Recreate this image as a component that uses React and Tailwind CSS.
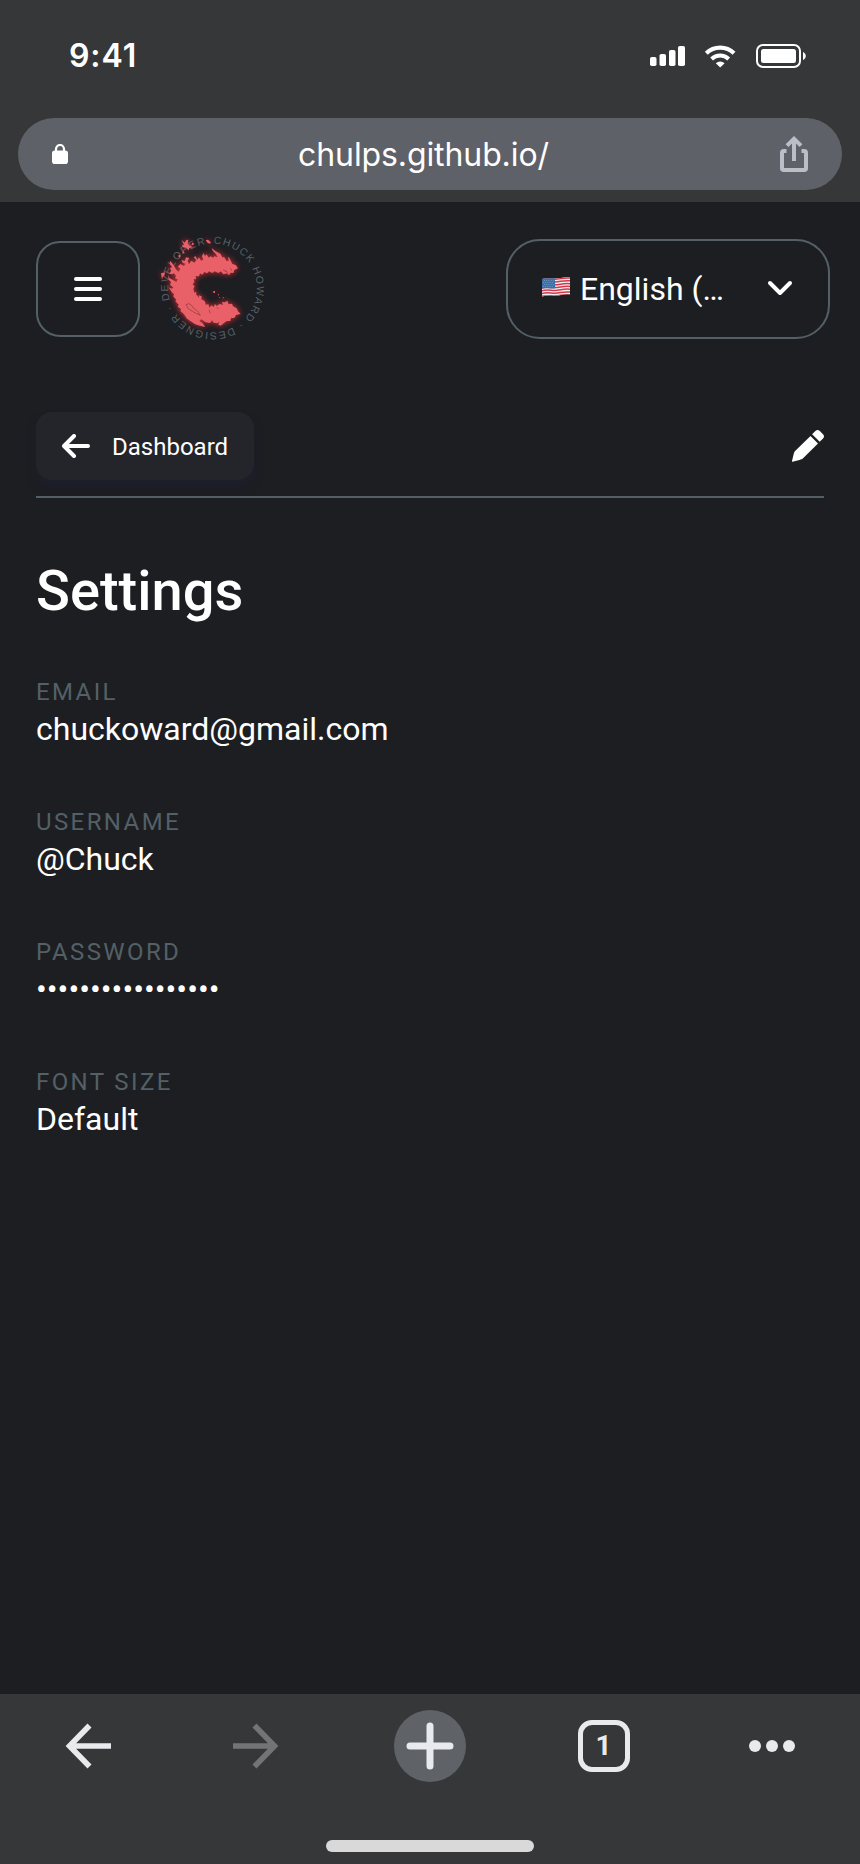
import React from "react";

const FIELDS = [
  { label: "EMAIL", value: "chuckoward@gmail.com" },
  { label: "USERNAME", value: "@Chuck" },
  { label: "PASSWORD", value: "•••••••••••••••••" },
  { label: "FONT SIZE", value: "Default" },
];

function StatusBar() {
  return (
    <div className="flex h-[118px] items-start justify-between pl-[69px] pr-[53px]">
      <span className="mt-[36px] font-['Inter'] text-[32px] font-semibold leading-[40px] tracking-[0.9px]">9:41</span>
      <svg className="mt-[43px]" width="157" height="26" viewBox="650 43 157 26" fill="#fff">
        <rect x="650" y="57" width="6.5" height="9" rx="1.8" />
        <rect x="659.5" y="54" width="6.5" height="12" rx="1.8" />
        <rect x="669" y="50" width="6.5" height="16" rx="1.8" />
        <rect x="678" y="46" width="7" height="20" rx="1.8" />
        <path d="M706.3 53.2A20 20 0 0 1 734 53.2" fill="none" stroke="#fff" strokeWidth="4.2" />
        <path d="M711.6 59A12.5 12.5 0 0 1 728.7 59" fill="none" stroke="#fff" strokeWidth="4" />
        <path d="M715.8 63.2a6.8 6.8 0 0 1 8.8 0l-4.4 4.4z" />
        <rect x="757" y="45" width="43" height="22" rx="6" fill="none" stroke="#fff" strokeWidth="2" />
        <rect x="761" y="49" width="35" height="14" rx="2.5" />
        <path d="M803 52c3.700 1.600 3.700 6.400 0 8z" />
      </svg>
    </div>
  );
}

function AddressBar() {
  return (
    <div className="mx-[18px] flex h-[72px] items-center justify-between rounded-full bg-[#5f6168] pl-[34px] pr-[34px]">
      <svg width="16" height="20" viewBox="0 0 16 20" className="shrink-0">
        <rect y="6.5" width="16" height="13.5" rx="2.8" fill="#fff" />
        <path d="M4 8V5a4 4 0 0 1 8 0v3" fill="none" stroke="#fff" strokeWidth="2.2" />
      </svg>
      <span className="-ml-px mt-px font-['Inter'] text-[32px] leading-[40px] tracking-[-0.1px]">chulps.github.io/</span>
      <svg width="28" height="36" viewBox="0 0 28 36" fill="none" stroke="#bbbec8" strokeWidth="4">
        <path d="M6.5 15H3.8A1.8 1.8 0 0 0 2 16.800V32.200A1.800 1.800 0 0 0 3.800 34H24.200A1.800 1.800 0 0 0 26 32.200V16.800A1.800 1.800 0 0 0 24.200 15H21.500" />
        <path d="M14 25V3M7 9.700L14 2.800L21 9.700" />
      </svg>
    </div>
  );
}

function Logo() {
  return (
    <svg width="125" height="125" viewBox="0 0 375 375" className="mb-[3px] ml-[10px] overflow-visible">
      <defs>
        <path id="ring" d="M187.500 56A133 133 0 1 1 187.400 56" />
        <filter id="glow" x="-30%" y="-30%" width="160%" height="160%">
          <feGaussianBlur stdDeviation="9" />
        </filter>
        <g id="splash">
          <path d="M264 130L257 120L247 117L238 98L234 96L236 108L229 107L222 95L218 98L211 86L197 79L185 69L188 77L198 88L203 97L193 94L190 98L181 94L176 98L170 88L165 93L160 84L156 94L160 104L153 107L147 97L142 104L137 94L131 96L139 106L133 113L124 107L117 118L113 108L118 99L108 97L104 108L94 105L98 113L106 116L102 123L91 117L83 125L91 131L86 140L79 134L70 119L61 107L59 117L66 126L60 130L64 138L58 146L66 148L72 145L78 153L75 160L83 163L79 171L68 164L59 160L54 151L56 164L63 171L60 180L70 187L66 191L56 187L65 201L73 209L69 213L79 224L76 229L86 239L83 245L93 252L91 258L102 268L111 281L124 290L136 298L150 302L166 306L158 295L148 287L154 283L167 292L180 294L186 286L191 293L202 295L208 290L205 299L212 302L222 294L230 288L241 288L243 279L253 279L258 270L272 267L264 259L260 250L249 244L246 236L236 238L232 227L225 232L216 231L219 240L209 237L200 243L195 237L191 246L184 241L178 248L175 237L168 240L164 228L154 223L155 214L146 211L148 219L138 208L139 200L133 203L130 191L134 184L128 178L133 171L131 162L138 163L137 153L147 154L150 145L157 149L163 141L171 145L177 139L187 144L194 139L205 144L213 139L220 148L231 145L237 151L242 143L250 144L253 135Z" />
          <path d="M95 45L104 53L109 45L115 44L113 55L118 62L130 66L118 69L116 76L108 68L99 67L96 60L102 60ZM33 145L45 142L44 149L38 156L36 164ZM167 46L174 44L182 51L181 56L173 54ZM97 80L101 78L102 84L98 87ZM86 89L91 91L90 98L85 95ZM126 53L131 54L130 60L126 60ZM190 198h5v6h-5zM204 208h3v3h-3zM207 216h2v3h-2zM218 217h3v3h-3zM67 122L75 132L70 135Z" />
        </g>
      </defs>
      <text fill="#566268" className="font-['Liberation_Sans'] text-[31px]">
        <textPath href="#ring" startOffset="3" textLength="810" lengthAdjust="spacing">CHUCK HOWARD · DESIGNER · DEVELOPER</textPath>
      </text>
      <use href="#splash" fill="#f5303c" opacity="0.85" filter="url(#glow)" />
      <use href="#splash" fill="#ea6068" />
      <path d="M82 252L99 270L112 284L128 294" fill="none" stroke="#7a2c34" strokeWidth="2" />
      <path d="M108 239L116 236L124 240L130 249L143 259L151 271L140 266L127 259L116 252L108 239M226 136L235 144M219 134L229 141M242 130L245 137M200 246L205 252M177 255L181 265" fill="none" stroke="#8d363e" strokeWidth="2" />
    </svg>
  );
}

function Flag() {
  return (
    <svg width="30" height="22" viewBox="0 0 30 22">
      <defs>
        <clipPath id="flagShape">
          <path d="M1 3C5 1.500 9 2.500 14 2.500S23 .5 29 1.500V18.500C23 17.500 19 20 14 20S5 19 1 20.500Z" />
        </clipPath>
      </defs>
      <g clipPath="url(#flagShape)">
        <path d="M0 0H30V22H0Z" fill="#f1eef0" />
        <g fill="none" stroke="#d23a4c" strokeWidth="1.500">
          <path d="M0 3.800C5 2 9 3.200 14 3.200S23 1 30 2.200M0 6.600C5 4.800 9 6 14 6S23 3.800 30 5M0 9.400C5 7.600 9 8.800 14 8.800S23 6.600 30 7.800M0 12.200C5 10.400 9 11.600 14 11.600S23 9.400 30 10.600M0 15C5 13.200 9 14.400 14 14.400S23 12.200 30 13.400M0 17.800C5 16 9 17.200 14 17.200S23 15 30 16.200M0 20.600C5 18.800 9 20 14 20S23 17.800 30 19" />
        </g>
        <path d="M0 0H14V12.500C9 12.500 5 11.500 0 13Z" fill="#3c6ea8" />
        <path d="M3 4.500H13M2 6.500H13M3 8.500H13M2 10.500H13" stroke="#7fa3cb" strokeWidth=".7" strokeDasharray="1 1.200" />
      </g>
    </svg>
  );
}

function SiteHeader() {
  return (
    <header className="flex h-[174px] items-center pl-9 pr-[30px]">
      <button className="flex h-24 w-[104px] items-center justify-center rounded-3xl border-2 border-[#536066]">
        <span className="flex w-7 flex-col gap-[6px]">
          <span className="h-1 rounded-full bg-white" />
          <span className="h-1 rounded-full bg-white" />
          <span className="h-1 rounded-full bg-white" />
        </span>
      </button>
      <Logo />
      <button className="ml-auto flex h-[100px] w-[324px] items-center rounded-[34px] border-2 border-[#536066] pl-[33px]">
        <span className="-mt-[5px]"><Flag /></span>
        <span className="ml-[9px] text-[32px] leading-[40px]">English (…</span>
        <svg width="26" height="16" viewBox="0 0 26 16" className="ml-auto mr-[35px] -mt-[3px]">
          <path d="M3 3L13 13L23 3" fill="none" stroke="#fff" strokeWidth="4" strokeLinecap="round" strokeLinejoin="round" />
        </svg>
      </button>
    </header>
  );
}

function PageToolbar() {
  return (
    <div className="mx-9 mt-9 flex h-[86px] items-start justify-between border-b-2 border-[#536066]">
      <button className="flex h-[68px] w-[218px] items-center rounded-2xl bg-[#24252a] pl-[26px] shadow-[0_8px_8px_0_rgba(28,32,48,0.6)]">
        <svg width="28" height="24" viewBox="0 0 28 24" fill="none" stroke="#fff" strokeWidth="4" strokeLinecap="round" strokeLinejoin="round">
          <path d="M12 2L2 12L12 22M2.500 12H26" />
        </svg>
        <span className="ml-[22px] mt-[2px] text-2xl">Dashboard</span>
      </button>
      <svg width="33" height="33" viewBox="0 0 33 33" fill="#fff" className="mt-[17px]">
        <path d="M19.500 6.900L27 14.400L12.300 29.100C11.300 30.100 10 30.600 8.500 31L1.600 32.800Q.8 33 1 32L2.700 25C3 23.500 3.600 22.500 4.600 21.500Z" />
        <path d="M21.100 5.300L24.400 2Q26.600 0 28.800 2L32 5.200Q34 7.400 32 9.600L28.700 12.800Z" />
      </svg>
    </div>
  );
}

function BrowserToolbar() {
  return (
    <footer className="flex h-[170px] flex-col items-center bg-[#363738] pt-4">
      <div className="grid h-[72px] w-[860px] grid-cols-5 items-center px-[2px]">
        <svg width="46" height="46" viewBox="0 0 46 46" className="ml-[63px]" fill="none" stroke="#e8eaed" strokeWidth="5.600">
          <path d="M24.500 2.500L4.500 23L24.500 43.500M4.500 23H46" />
        </svg>
        <svg width="46" height="46" viewBox="0 0 46 46" className="ml-[60px]" fill="none" stroke="#737476" strokeWidth="5.600">
          <path d="M21.500 2.500L41.500 23L21.500 43.500M41.500 23H0" />
        </svg>
        <div className="flex size-[72px] items-center justify-center justify-self-center rounded-full bg-[#5f6368]">
          <svg width="48" height="48" viewBox="0 0 48 48" stroke="#e8eaed" strokeWidth="7" strokeLinecap="round">
            <path d="M24 4V44M4 24H44" />
          </svg>
        </div>
        <div className="ml-[62px] flex size-[52px] items-center justify-center rounded-[14px] border-[5.500px] border-[#e8eaed] text-[28px] font-bold leading-none text-[#e8eaed]">1</div>
        <div className="ml-[62px] flex gap-[5px]">
          <span className="size-3 rounded-full bg-[#e8eaed]" />
          <span className="size-3 rounded-full bg-[#e8eaed]" />
          <span className="size-3 rounded-full bg-[#e8eaed]" />
        </div>
      </div>
      <div className="mt-[58px] h-3 w-[208px] rounded-full bg-[#d9d9d9]" />
    </footer>
  );
}

export default function App() {
  return (
    <div className="flex h-[1864px] w-[860px] flex-col overflow-hidden bg-[#1d1e22] font-['Roboto',sans-serif] text-white">
      <div className="h-[202px] shrink-0 bg-[#363738]">
        <StatusBar />
        <AddressBar />
      </div>
      <SiteHeader />
      <PageToolbar />
      <main className="flex-1 px-9">
        <h1 className="mt-[60px] text-[56px] font-medium leading-[66px]">Settings</h1>
        <dl className="mt-[52px] flex flex-col gap-[54px]">
          {FIELDS.map((field) => (
            <div key={field.label} className="h-[76px]">
              <dt className="text-2xl leading-[32px] tracking-[2.400px] text-[#536066]">{field.label}</dt>
              <dd className="mt-px text-[32px] leading-[40px]">{field.value}</dd>
            </div>
          ))}
        </dl>
      </main>
      <BrowserToolbar />
    </div>
  );
}
